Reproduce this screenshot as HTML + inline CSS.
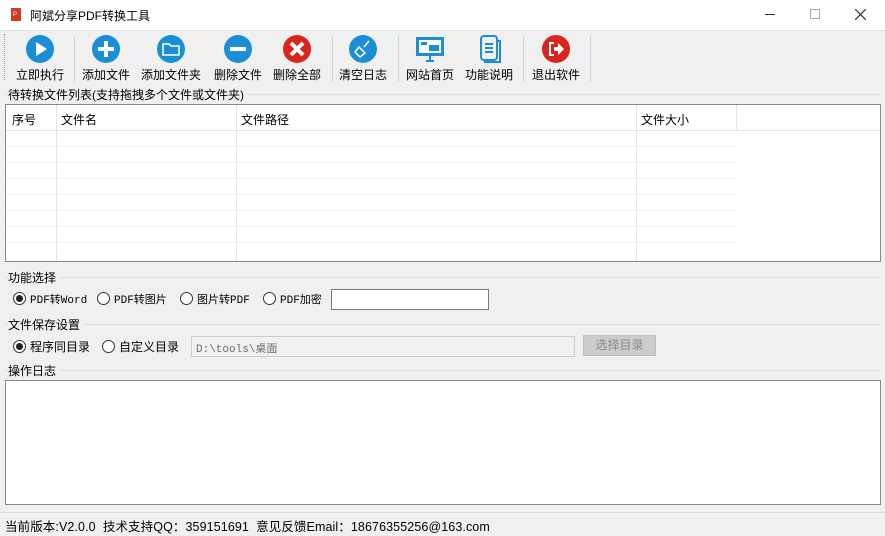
<!DOCTYPE html>
<html><head><meta charset="utf-8">
<style>
*{margin:0;padding:0;box-sizing:border-box}
body{width:885px;height:536px;background:#f0f0f0;font-family:"Liberation Sans","Noto Sans CJK SC",sans-serif;font-size:12px;color:#000;position:relative;overflow:hidden}
.a{position:absolute;white-space:nowrap}
.sep{position:absolute;top:36px;width:1px;height:46px;background:#d0d0d0}
.btn{position:absolute;top:34px;text-align:center;font-size:12px;line-height:14px}
.btn svg{display:block;margin:0 auto 4px}
.hl{position:absolute;height:1px;background:#dcdcdc}
.radio{position:absolute;width:13px;height:13px;border:1px solid #333;border-radius:50%;background:#fff}
.radio.on::after{content:"";position:absolute;left:2px;top:2px;width:7px;height:7px;border-radius:50%;background:#222}
.mono{font-family:"Liberation Mono","Noto Sans CJK SC",monospace;font-size:11px}
</style></head><body>
<div class="a" style="left:0;top:0;width:885px;height:30px;background:#fff"></div>
<svg class="a" style="left:10px;top:7px" width="12" height="15"><rect x="1" y="1" width="10" height="13" fill="#d33a26"/><text x="3" y="9" font-size="6" fill="#fff">P</text></svg>
<div class="a" style="left:30px;top:7px;font-size:12px">阿斌分享PDF转换工具</div>
<div class="a" style="left:765px;top:14px;width:10px;height:1px;background:#333"></div>
<div class="a" style="left:810px;top:9px;width:10px;height:10px;border:1px solid #aaa"></div>
<svg class="a" style="left:855px;top:9px" width="11" height="11"><path d="M0 0L11 11M11 0L0 11" stroke="#333" stroke-width="1.2"/></svg>
<div class="a" style="left:0;top:30px;width:885px;height:1px;background:#e0e0e0"></div>
<div class="a" style="left:4px;top:34px;width:1px;height:46px;border-left:1px dotted #999"></div>

<div class="btn" style="left:10px;width:60px"><svg width="30" height="30"><circle cx="15" cy="15" r="14" fill="#1b8ed6"/><path d="M11 8L22 15L11 22Z" fill="#fff"/></svg>立即执行</div>
<div class="sep" style="left:74px"></div>
<div class="btn" style="left:76px;width:60px"><svg width="30" height="30"><circle cx="15" cy="15" r="14" fill="#1b8ed6"/><path d="M15 7V23M7 15H23" stroke="#fff" stroke-width="4"/></svg>添加文件</div>
<div class="btn" style="left:136px;width:70px"><svg width="30" height="30"><circle cx="15" cy="15" r="14" fill="#1b8ed6"/><path d="M7 10H13L15 12H23V21H7Z" fill="none" stroke="#fff" stroke-width="1.6"/></svg>添加文件夹</div>
<div class="btn" style="left:208px;width:60px"><svg width="30" height="30"><circle cx="15" cy="15" r="14" fill="#1b8ed6"/><path d="M7 15H23" stroke="#fff" stroke-width="4"/></svg>删除文件</div>
<div class="btn" style="left:267px;width:60px"><svg width="30" height="30"><circle cx="15" cy="15" r="14" fill="#d9261c"/><path d="M9 9L21 21M21 9L9 21" stroke="#fff" stroke-width="4"/></svg>删除全部</div>
<div class="sep" style="left:332px"></div>
<div class="btn" style="left:333px;width:60px"><svg width="30" height="30"><circle cx="15" cy="15" r="14" fill="#1b8ed6"/><path d="M21 7L16 13M11 13L17 19L12 23L7 18Z" fill="none" stroke="#fff" stroke-width="1.5"/></svg>清空日志</div>
<div class="sep" style="left:398px"></div>
<div class="btn" style="left:400px;width:60px"><svg width="30" height="30"><rect x="1" y="3" width="28" height="19" fill="#1b8ed6"/><rect x="4" y="6" width="22" height="13" fill="#fff"/><rect x="6" y="8" width="6" height="3" fill="#1b8ed6"/><rect x="14" y="11" width="10" height="6" fill="#1b8ed6"/><path d="M11 27H19M15 22V27" stroke="#1b8ed6" stroke-width="2"/></svg>网站首页</div>
<div class="btn" style="left:459px;width:60px"><svg width="30" height="30"><rect x="7" y="2" width="16" height="24" rx="3" fill="none" stroke="#1b8ed6" stroke-width="2"/><path d="M23 7H26V28H11V26" fill="none" stroke="#1b8ed6" stroke-width="2"/><path d="M11 10H19M11 14H19M11 18H19" stroke="#1b8ed6" stroke-width="2"/></svg>功能说明</div>
<div class="sep" style="left:523px"></div>
<div class="btn" style="left:526px;width:60px"><svg width="30" height="30"><circle cx="15" cy="15" r="14" fill="#d9261c"/><path d="M13 9H9V21H13" fill="none" stroke="#fff" stroke-width="2"/><path d="M13 13H17V9L23 15L17 21V17H13Z" fill="#fff"/></svg>退出软件</div>
<div class="sep" style="left:590px"></div>

<div class="hl" style="left:5px;top:94px;width:875px"></div>
<div class="a" style="left:8px;top:86px;background:#f0f0f0;padding-right:4px">待转换文件列表(支持拖拽多个文件或文件夹)</div>
<div class="a" style="left:5px;top:104px;width:876px;height:158px;background:#fff;border:1px solid #828790"></div>
<div class="a" style="left:6px;top:105px;width:874px;height:26px;border-bottom:1px solid #e5e5e5"></div>
<div class="a" style="left:12px;top:111px">序号</div>
<div class="a" style="left:61px;top:111px">文件名</div>
<div class="a" style="left:241px;top:111px">文件路径</div>
<div class="a" style="left:641px;top:111px">文件大小</div>
<div class="a" style="left:56px;top:105px;width:1px;height:156px;background:#e5e5e5"></div>
<div class="a" style="left:236px;top:105px;width:1px;height:156px;background:#e5e5e5"></div>
<div class="a" style="left:636px;top:105px;width:1px;height:156px;background:#e5e5e5"></div>
<div class="a" style="left:736px;top:105px;width:1px;height:26px;background:#e5e5e5"></div>
<div class="hl" style="left:6px;top:146px;width:730px;background:#f0f0f0"></div>
<div class="hl" style="left:6px;top:162px;width:730px;background:#f0f0f0"></div>
<div class="hl" style="left:6px;top:178px;width:730px;background:#f0f0f0"></div>
<div class="hl" style="left:6px;top:194px;width:730px;background:#f0f0f0"></div>
<div class="hl" style="left:6px;top:210px;width:730px;background:#f0f0f0"></div>
<div class="hl" style="left:6px;top:226px;width:730px;background:#f0f0f0"></div>
<div class="hl" style="left:6px;top:242px;width:730px;background:#f0f0f0"></div>

<div class="hl" style="left:5px;top:277px;width:875px"></div>
<div class="a" style="left:8px;top:269px;background:#f0f0f0;padding-right:4px">功能选择</div>
<div class="radio on" style="left:13px;top:292px"></div><div class="a mono" style="left:30px;top:291px">PDF转Word</div>
<div class="radio" style="left:97px;top:292px"></div><div class="a mono" style="left:114px;top:291px">PDF转图片</div>
<div class="radio" style="left:180px;top:292px"></div><div class="a mono" style="left:197px;top:291px">图片转PDF</div>
<div class="radio" style="left:263px;top:292px"></div><div class="a mono" style="left:280px;top:291px">PDF加密</div>
<div class="a" style="left:331px;top:289px;width:158px;height:21px;background:#fff;border:1px solid #7a7a7a"></div>

<div class="hl" style="left:5px;top:324px;width:875px"></div>
<div class="a" style="left:8px;top:316px;background:#f0f0f0;padding-right:4px">文件保存设置</div>
<div class="radio on" style="left:13px;top:340px"></div><div class="a" style="left:30px;top:338px">程序同目录</div>
<div class="radio" style="left:102px;top:340px"></div><div class="a" style="left:119px;top:338px">自定义目录</div>
<div class="a mono" style="left:191px;top:336px;width:384px;height:21px;background:#f0f0f0;border:1px solid #ccc;color:#6d6d6d;padding:3px 4px">D:\tools\桌面</div>
<div class="a" style="left:583px;top:335px;width:73px;height:21px;background:#ccc;border:1px solid #bfbfbf;color:#8a8a8a;text-align:center;line-height:19px">选择目录</div>

<div class="hl" style="left:5px;top:370px;width:875px"></div>
<div class="a" style="left:8px;top:362px;background:#f0f0f0;padding-right:4px">操作日志</div>
<div class="a" style="left:5px;top:380px;width:876px;height:125px;background:#fff;border:1px solid #828790"></div>

<div class="a" style="left:0;top:512px;width:885px;height:1px;background:#dcdcdc"></div>
<div class="a" style="left:5px;top:516px;font-size:12.5px;letter-spacing:0.1px">当前版本:V2.0.0&nbsp; 技术支持QQ：359151691&nbsp; 意见反馈Email：18676355256@163.com</div>
</body></html>
